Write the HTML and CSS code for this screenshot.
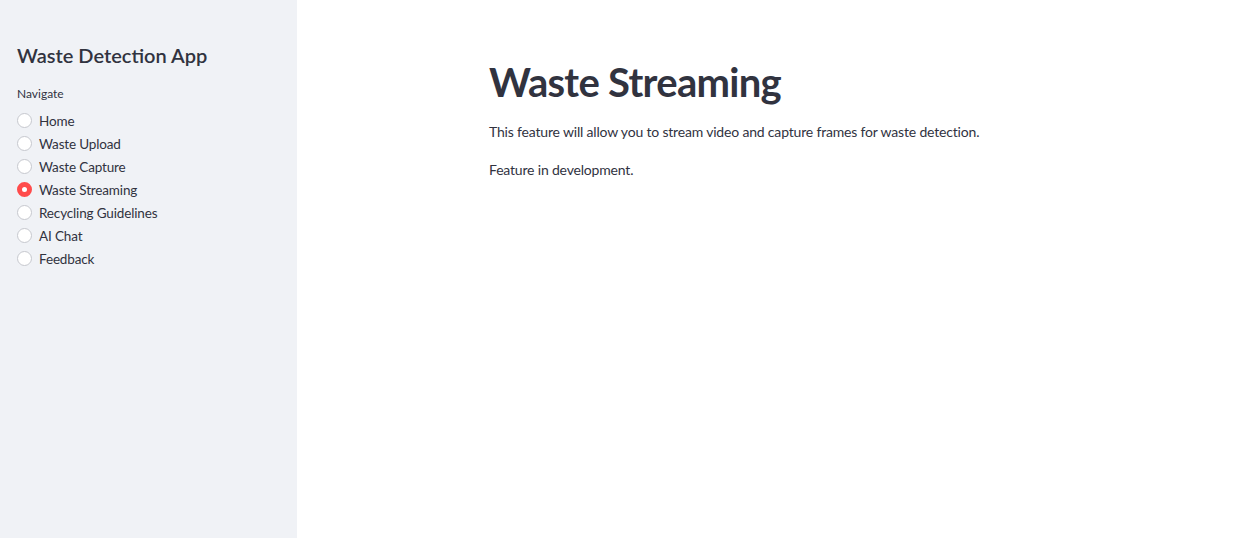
FILE: index.html
```html
<!DOCTYPE html>
<html lang="en">
<head>
<meta charset="utf-8">
<title>Waste Detection App</title>
<link rel="stylesheet" href="styles.css">
</head>
<body>
<div class="app">
  <aside class="sidebar">
    <h2 class="side-title">Waste Detection App</h2>
    <div class="nav-label">Navigate</div>
    <ul class="radio-list">
      <li class="radio-item"><span class="radio"></span><span class="radio-text">Home</span></li>
      <li class="radio-item"><span class="radio"></span><span class="radio-text">Waste Upload</span></li>
      <li class="radio-item"><span class="radio"></span><span class="radio-text">Waste Capture</span></li>
      <li class="radio-item"><span class="radio checked"></span><span class="radio-text">Waste Streaming</span></li>
      <li class="radio-item"><span class="radio"></span><span class="radio-text">Recycling Guidelines</span></li>
      <li class="radio-item"><span class="radio"></span><span class="radio-text">AI Chat</span></li>
      <li class="radio-item"><span class="radio"></span><span class="radio-text">Feedback</span></li>
    </ul>
  </aside>
  <main class="main">
    <h1 class="page-title">Waste Streaming</h1>
    <p class="para">This feature will allow you to stream video and capture frames for waste detection.</p>
    <p class="para">Feature in development.</p>
  </main>
</div>
</body>
</html>
```
FILE: styles.css
```css
html, body {
  margin: 0;
  padding: 0;
  height: 100%;
  background: #ffffff;
  color: #31333f;
  font-family: "Lato", "Source Sans Pro", "Liberation Sans", sans-serif;
}
.app {
  display: flex;
  height: 100vh;
}
.sidebar {
  width: 297px;
  flex: 0 0 297px;
  background: #f0f2f6;
  box-sizing: border-box;
  padding: 41px 17px 0 17px;
}
.side-title {
  margin: 0;
  font-size: 20px;
  font-weight: 600;
  line-height: 28px;
  color: #31333f;
}
.nav-label {
  margin-top: 17px;
  font-size: 12px;
  line-height: 16px;
  color: #31333f;
}
.radio-list {
  list-style: none;
  margin: 7px 0 0 0;
  padding: 0;
}
.radio-item {
  display: flex;
  align-items: center;
  height: 23px;
  gap: 7px;
}
.radio {
  width: 13px;
  height: 13px;
  border-radius: 50%;
  background: #ffffff;
  border: 1px solid #c6c8ce;
  flex: 0 0 auto;
  box-sizing: content-box;
}
.radio.checked {
  width: 5px;
  height: 5px;
  border: 5px solid #ff4b4b;
}
.radio-text {
  font-size: 13.5px;
  line-height: 20px;
  letter-spacing: -0.15px;
}
.main {
  flex: 1;
  padding: 58px 0 0 192px;
}
.page-title {
  margin: 0;
  font-size: 40px;
  font-weight: 700;
  line-height: 48px;
  letter-spacing: -0.7px;
  color: #31333f;
}
.para {
  margin: 14px 0 0 0;
  font-size: 14px;
  line-height: 24px;
  letter-spacing: -0.18px;
}
.para + .para {
  margin-top: 14px;
}
```
